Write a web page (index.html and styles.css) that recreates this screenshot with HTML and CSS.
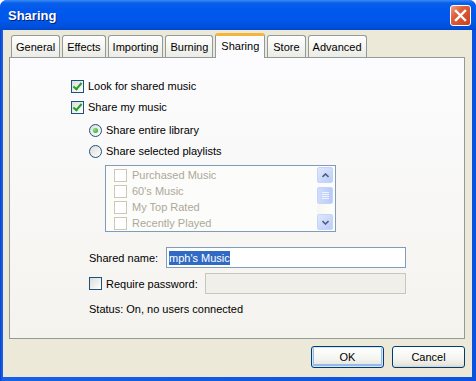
FILE: index.html
```html
<!DOCTYPE html>
<html lang="en">
<head>
  <meta charset="UTF-8" />
  <title>Sharing</title>
  <link rel="stylesheet" href="styles.css">
</head>
<body>
  <div class="window">
    <div class="titlebar">
      <span class="title">Sharing</span>
      <button class="close" aria-label="Close">
        <svg width="13" height="13" viewBox="0 0 13 13"><path d="M2 2 L11 11 M11 2 L2 11" stroke="#fff" stroke-width="2.4" stroke-linecap="square"/></svg>
      </button>
    </div>

    <div class="client">
      <div class="tabs">
        <div class="tab">General</div>
        <div class="tab">Effects</div>
        <div class="tab">Importing</div>
        <div class="tab">Burning</div>
        <div class="tab active">Sharing</div>
        <div class="tab tab-store">Store</div>
        <div class="tab">Advanced</div>
      </div>

      <div class="panel">
        <label class="row row-look"><span class="check on"></span>Look for shared music</label>
        <label class="row row-share"><span class="check on"></span>Share my music</label>
        <div class="sub">
          <label class="row row-entire"><span class="radio on"></span>Share entire library</label>
          <label class="row row-selected"><span class="radio"></span>Share selected playlists</label>
          <div class="listbox">
            <ul class="items">
              <li><span class="check off"></span>Purchased Music</li>
              <li><span class="check off"></span>60's Music</li>
              <li><span class="check off"></span>My Top Rated</li>
              <li><span class="check off"></span>Recently Played</li>
            </ul>
            <div class="scrollbar">
              <div class="sb-btn">
                <svg width="7" height="5" viewBox="0 0 7 5"><path d="M0.5 4 L3.5 1 L6.5 4" fill="none" stroke="#4d6185" stroke-width="1.6"/></svg>
              </div>
              <div class="sb-thumb"><span></span><span></span><span></span><span></span></div>
              <div class="sb-track"></div>
              <div class="sb-btn">
                <svg width="7" height="5" viewBox="0 0 7 5"><path d="M0.5 1 L3.5 4 L6.5 1" fill="none" stroke="#4d6185" stroke-width="1.6"/></svg>
              </div>
            </div>
          </div>

          <div class="row field-row name-row">
            <span class="field-label">Shared name:</span>
            <div class="input"><span class="selected">mph's Music</span></div>
          </div>
          <div class="row field-row pass-row">
            <label class="pass-label"><span class="check"></span>Require password:</label>
            <div class="input disabled"></div>
          </div>
          <div class="row status">Status: On, no users connected</div>
        </div>
      </div>

      <div class="buttons">
        <button class="btn default">OK</button>
        <button class="btn">Cancel</button>
      </div>
    </div>
  </div>
</body>
</html>
```

FILE: styles.css
```css
* {
  box-sizing: border-box;
}

body {
  margin: 0;
  background: #fff;
  font-family: "Liberation Sans", Arial, sans-serif;
  font-size: 11px;
  color: #000;
}

.window {
  width: 476px;
  height: 381px;
  display: flex;
  flex-direction: column;
  background: linear-gradient(90deg, #0840c8 0, #1860e8 2px, #0a52e0 100%);
  border-radius: 7px 7px 0 0;
  overflow: hidden;
}

.titlebar {
  height: 30px;
  flex-shrink: 0;
  display: flex;
  align-items: center;
  justify-content: space-between;
  padding: 0 5px 0 8px;
  background: linear-gradient(#3b8cf5 0, #0a5fe8 3px, #0058ee 9px, #0157ea 20px, #0050dc 27px, #0048cc 30px);
}

.title {
  color: #fff;
  font-weight: bold;
  font-size: 13px;
  text-shadow: 1px 1px 0 #0a1e70;
  margin-top: 1px;
}

.close {
  width: 21px;
  height: 21px;
  padding: 0;
  border: 1px solid #fff;
  border-radius: 3px;
  background: linear-gradient(135deg, #f0a08a 0, #e0603c 35%, #c8401c 100%);
  display: flex;
  align-items: center;
  justify-content: center;
  margin-top: 1px;
}

.client {
  flex: 1;
  margin: 0 4px 4px 3px;
  background: #ece9d8;
  padding: 3px 7px 9px 6px;
  display: flex;
  flex-direction: column;
}

.tabs {
  display: flex;
  align-items: flex-end;
  gap: 2px;
  height: 24px;
  padding-left: 2px;
  position: relative;
  z-index: 1;
}

.tab {
  height: 22px;
  padding: 0 4px;
  border: 1px solid #919b9c;
  border-bottom: none;
  border-radius: 3px 3px 0 0;
  background: linear-gradient(#fff, #f3f3ef 60%, #ecebe6);
  display: flex;
  align-items: center;
  justify-content: center;
}

.tab-store {
  padding: 0 5px;
}

.tab.active {
  height: 25px;
  margin-bottom: -1px;
  border-top: 3px solid #f5b53a;
  background: #fcfcfe;
  padding: 0 5px 2px;
}

.panel {
  flex: 1;
  border: 1px solid #919b9c;
  background: linear-gradient(#fcfcfe, #f4f3ee);
  padding: 20px 0 0 61px;
  display: flex;
  flex-direction: column;
}

.row {
  height: 16px;
  display: flex;
  align-items: center;
}

.row-share {
  margin-top: 5px;
}

.sub {
  padding-left: 18px;
  display: flex;
  flex-direction: column;
}

.row-entire {
  margin-top: 7px;
}

.row-selected {
  margin-top: 5px;
}

.check {
  width: 13px;
  height: 13px;
  border: 1px solid #1c5180;
  background: linear-gradient(135deg, #dcdcd7, #fff);
  margin-right: 4px;
  flex-shrink: 0;
  position: relative;
}

.check.on::after {
  content: "";
  position: absolute;
  left: 3px;
  top: 0px;
  width: 3px;
  height: 7px;
  border: solid #21a121;
  border-width: 0 2px 2px 0;
  transform: rotate(40deg);
}

.check.off {
  border-color: #cac8bb;
  background: #fff;
}

.radio {
  width: 13px;
  height: 13px;
  border: 1px solid #1c5180;
  border-radius: 50%;
  background: linear-gradient(135deg, #dcdcd7, #fff);
  margin-right: 4px;
  flex-shrink: 0;
  display: flex;
  align-items: center;
  justify-content: center;
}

.radio.on::after {
  content: "";
  width: 5px;
  height: 5px;
  border-radius: 50%;
  background: radial-gradient(circle at 35% 35%, #8ee07a, #21a121);
}

.listbox {
  margin: 6px 0 0 16px;
  width: 231px;
  height: 67px;
  border: 1px solid #7f9db9;
  background: #fcfcfa;
  display: flex;
  padding: 1px;
}

.items {
  list-style: none;
  margin: 0;
  padding: 0 0 0 7px;
  flex: 1;
  color: #aca899;
}

.items li {
  height: 16px;
  display: flex;
  align-items: center;
}

.items .check {
  margin-right: 5px;
}

.scrollbar {
  width: 16px;
  display: flex;
  flex-direction: column;
  margin-right: 1px;
}

.sb-btn {
  height: 16px;
  border: 1px solid #c6d4f7;
  border-radius: 2px;
  background: linear-gradient(135deg, #dfe8fd, #bccdf9);
  display: flex;
  align-items: center;
  justify-content: center;
}

.sb-thumb {
  height: 17px;
  margin-top: 4px;
  border: 1px solid #c6d4f7;
  border-radius: 2px;
  background: linear-gradient(90deg, #cfdcfc, #b8cafa);
  display: flex;
  flex-direction: column;
  align-items: center;
  justify-content: center;
  gap: 1px;
}

.sb-thumb span {
  width: 7px;
  height: 1px;
  background: #eef3fe;
}

.sb-track {
  flex: 1;
  background: linear-gradient(90deg, #f7f7f2, #fefefb);
}

.field-row {
  height: 21px;
}

.name-row {
  margin-top: 15px;
}

.field-label {
  width: 77px;
}

.input {
  width: 240px;
  height: 21px;
  border: 1px solid #7f9db9;
  background: #fff;
  padding: 0 2px;
  display: flex;
  align-items: center;
}

.selected {
  background: #316ac5;
  color: #fff;
  line-height: 14px;
}

.pass-row {
  margin-top: 5px;
}

.pass-label {
  width: 116px;
  display: flex;
  align-items: center;
}

.input.disabled {
  width: 201px;
  border-color: #c9c7ba;
  background: #f0efe9;
}

.status {
  margin-top: 7px;
}

.buttons {
  display: flex;
  justify-content: flex-end;
  gap: 8px;
  margin-top: 7px;
}

.btn {
  width: 73px;
  height: 22px;
  border: 1px solid #003c74;
  border-radius: 3px;
  background: linear-gradient(#fff, #f4f4f0 60%, #e6e5dd 90%, #d6d0c5);
  font-family: "Liberation Sans", Arial, sans-serif;
  font-size: 11px;
  color: #000;
  padding: 0;
}

.btn.default {
  box-shadow: inset 0 0 0 1px #cee7ff, inset 0 -1px 0 2px #98b8ea;
}
```
